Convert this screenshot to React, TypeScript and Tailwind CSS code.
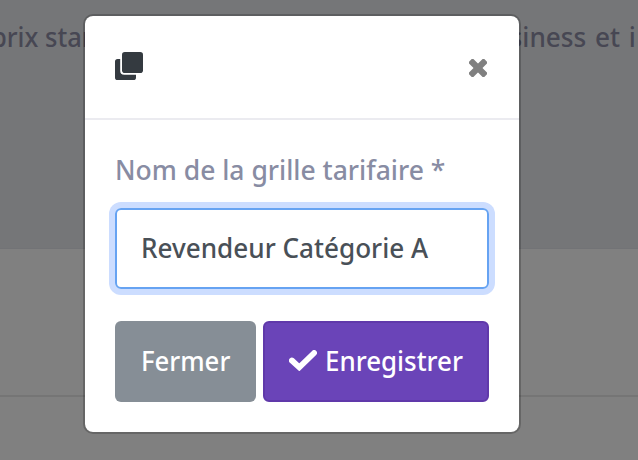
import React from "react";

function CopyIcon() {
  return (
    <svg width="28" height="28" viewBox="0 0 28 28" fill="#343a40" aria-hidden="true">
      <rect x="7" y="0" width="21" height="21" rx="2.8" />
      <path d="M5.200 7H2.6A2.6 2.6 0 0 0 0 9.6v15.8A2.6 2.6 0 0 0 2.6 28h15.8a2.6 2.6 0 0 0 2.6-2.6V22.800H9.2A4 4 0 0 1 5.200 18.800Z" />
    </svg>
  );
}

function CloseIcon() {
  return (
    <svg width="18" height="18" viewBox="0 0 18 18" fill="#808080" aria-hidden="true">
      <rect x="-1.800" y="5.900" width="21.600" height="6.200" rx="1.200" transform="rotate(45 9 9)" />
      <rect x="-1.800" y="5.900" width="21.600" height="6.200" rx="1.200" transform="rotate(-45 9 9)" />
    </svg>
  );
}

function CheckIcon() {
  return (
    <svg width="28" height="21" viewBox="0 0 28 21" fill="none" stroke="white" aria-hidden="true">
      <path d="M2.900 10.500 10.300 17.300 25.100 3" strokeWidth="5.800" strokeLinecap="round" strokeLinejoin="miter" />
    </svg>
  );
}

export default function App() {
  return (
    <div className="relative h-[460px] w-[638px] overflow-hidden bg-[#808080] font-['Noto_Sans',sans-serif] text-[27px] font-medium leading-[40px]">
      <div className="flex h-[249px] justify-between whitespace-nowrap border-b border-[#727376] bg-[#757678] pt-[17px] text-[#474753]">
        <span className="-ml-[9px] inline-block origin-left scale-x-[0.945]">prix standard</span>
        <span className="mr-[2px] inline-block origin-right scale-x-[0.97] [word-spacing:2px]">business et i</span>
      </div>
      <div className="h-[148px] border-b-2 border-[#757575]" />

      <div role="dialog" className="absolute left-[83px] top-[14px] w-[438px] rounded-[10px] border-2 border-black/20 bg-white bg-clip-padding">
        <header className="flex h-[104px] items-start justify-between border-b-2 border-[#ebebf0] pl-[30px] pr-[32px] pt-[36px]">
          <CopyIcon />
          <button aria-label="Fermer la fenêtre" className="mt-[7px]">
            <CloseIcon />
          </button>
        </header>
        <div className="h-[312px] px-[30px] pt-[30px]">
          <label className="block h-[58px] whitespace-nowrap text-[#888ca3]">
            <span className="inline-block origin-left scale-x-[0.981]">Nom de la grille tarifaire *</span>
          </label>
          <div className="flex h-[81px] items-center whitespace-nowrap rounded-[6px] border-2 border-[#66a3f2] pb-[2px] pl-[24px] text-[#495057] shadow-[0_0_0_6px_#ccddff]">
            <span className="inline-block origin-left scale-x-[0.967]">Revendeur Catégorie A</span>
          </div>
          <div className="mt-[32px] flex gap-[7px] text-white">
            <button className="flex h-[81px] w-[141px] items-center rounded-[6px] bg-[#868e96] pb-[2px] pl-[26px]">
              <span className="inline-block origin-left scale-x-[0.953]">Fermer</span>
            </button>
            <button className="flex h-[81px] w-[226px] items-center rounded-[6px] border-2 border-[#6039aa] bg-[#6a44b8] pb-[2px] pl-[24px]">
              <CheckIcon />
              <span className="ml-[8px] inline-block origin-left scale-x-[0.96]">Enregistrer</span>
            </button>
          </div>
        </div>
      </div>
    </div>
  );
}
